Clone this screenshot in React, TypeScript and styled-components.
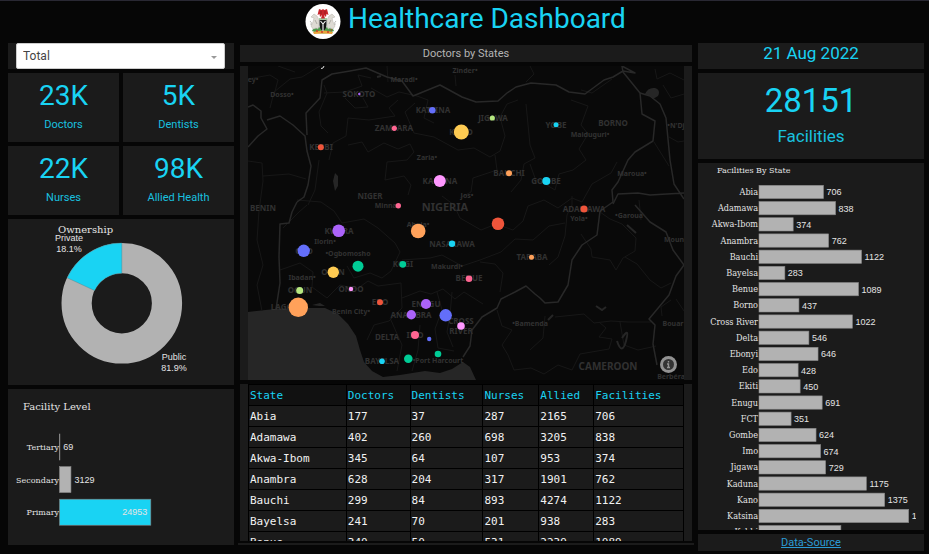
import React from "react";
import styled, { createGlobalStyle } from "styled-components";

const ACCENT = "#19d3f3";
const PANEL = "#1b1b1b";
const SERIF = '"DejaVu Serif", serif';
const SANS = '"Liberation Sans", sans-serif';

const GlobalStyle = createGlobalStyle`
  * { box-sizing: border-box; }
  body {
    margin: 0;
    background: #060606;
    color: #fff;
    font-family: Roboto, sans-serif;
  }
`;

const Page = styled.div`
  border-top: 1px solid #292833;
`;

const Header = styled.header`
  display: flex;
  justify-content: center;
  align-items: flex-start;
  gap: 7px;
  height: 42px;
  padding: 2px 0 0 2px;
`;

const Title = styled.h1`
  margin: 0;
  color: ${ACCENT};
  font-size: 28px;
  line-height: 31px;
  font-weight: 400;
`;

const Columns = styled.main`
  display: grid;
  grid-template-columns: minmax(0, 1fr) minmax(0, 2fr) minmax(0, 1fr);
  align-items: start;
  gap: 6px;
  padding: 0 5px 0 8px;
`;

const Column = styled.section<{ $top?: number }>`
  display: flex;
  flex-direction: column;
  gap: 4px;
  padding-top: ${(p) => p.$top ?? 0}px;
`;

const Panel = styled.div<{ $h?: number; $padX?: number }>`
  background: ${PANEL};
  height: ${(p) => (p.$h ? `${p.$h}px` : "auto")};
  padding: 0 ${(p) => p.$padX ?? 0}px;
  overflow: hidden;
`;

const ScrollPanel = styled(Panel)`
  overflow-y: auto;
  scrollbar-width: none;
`;

const SelectBox = styled.div`
  background: ${PANEL};
  padding: 0 9px 0 8px;
  display: grid;
  align-items: center;
  > * { grid-area: 1 / 1; }
`;

const Select = styled.select`
  appearance: none;
  width: 100%;
  height: 26px;
  border: 1px solid #ccc;
  border-radius: 2px;
  background: #fff;
  color: #444;
  padding: 0 6px;
  font: 12px Roboto, sans-serif;
`;

const Arrow = styled.svg`
  justify-self: end;
  margin: 3px 8px 0 0;
  pointer-events: none;
`;

const Cards = styled.div`
  display: grid;
  grid-template-columns: 1fr 1fr;
  gap: 4px;
`;

const Card = styled.div<{ $large?: boolean }>`
  background: ${PANEL};
  color: ${ACCENT};
  text-align: center;
  height: ${(p) => (p.$large ? 86 : 69)}px;
  padding-top: ${(p) => (p.$large ? 7 : 4)}px;
`;

const Value = styled.div<{ $large?: boolean }>`
  font-size: ${(p) => (p.$large ? 33 : 28)}px;
  line-height: ${(p) => (p.$large ? 41 : 38)}px;
`;

const Caption = styled.div<{ $large?: boolean }>`
  font-size: ${(p) => (p.$large ? 17 : 11)}px;
  line-height: ${(p) => (p.$large ? 30 : 20)}px;
  opacity: 0.9;
`;

const DateBar = styled.div`
  background: ${PANEL};
  color: ${ACCENT};
  text-align: center;
  font-size: 17px;
  line-height: 20px;
  padding-bottom: 6px;
`;

const StripTitle = styled.h2`
  margin: 0;
  background: ${PANEL};
  color: #b4b4b4;
  text-align: center;
  font-size: 11px;
  line-height: 17px;
  font-weight: 400;
`;

const Footer = styled.div`
  background: ${PANEL};
  text-align: center;
  font-size: 11px;
  line-height: 17px;
`;

const Link = styled.a`
  color: #2b9bd6;
  text-decoration: underline;
`;

const Drawing = styled.svg`
  display: block;
  width: 100%;
  height: auto;
`;

const Table = styled.table`
  width: 100%;
  table-layout: fixed;
  border-collapse: collapse;
  font: 11px/18px "DejaVu Sans Mono", monospace;
`;

const Cell = styled.td`
  border: 1px solid #000;
  height: 21px;
  padding: 2px 0 0 1px;
  color: #f2f2f2;
`;

const HeadCell = styled(Cell).attrs({ as: "th" })`
  background: #111;
  color: ${ACCENT};
  font-weight: 400;
  text-align: left;
`;

const EndRule = styled.div`
  height: 2px;
  margin: -2px -2px 0;
  background: ${PANEL};
`;

const Crest = () => (
  <svg width="36" height="36" viewBox="0 0 36 36" role="img" aria-label="Coat of arms">
    <circle cx="18" cy="18.500" r="17.500" fill="#fff" />
    <path d="M8 26 Q18 22 28 26 L29 28 Q18 33 7 28Z" fill="#4b9a4b" />
    <path d="M8 29 Q18 26 28 29 L27 31 Q18 30 9 31Z" fill="#e8a33a" />
    <path d="M11 28h2M16 29h2M22 29h2M26 27h1" stroke="#c93a2b" strokeWidth="1.300" />
    <g fill="#dedbd4" stroke="#b4b1a8" strokeWidth=".5">
      <path d="M14 17 L12 13 L9 11 L6 14 L9 15 L8 19 L6 23 L8 26 L11 25 L13 26 L14 21Z" />
      <path d="M22 17 L24 13 L27 11 L30 14 L27 15 L28 19 L30 23 L28 26 L25 25 L23 26 L22 21Z" />
    </g>
    <path d="M5 18q2 1 1 4M31 18q-2 1 -1 4M10 17l2 4M26 17l-2 4" fill="none" stroke="#8f8c84" strokeWidth=".6" />
    <path d="M14.500 17 H21.500 V22 Q21.500 26 18 28 Q14.500 26 14.500 22Z" fill="#151515" />
    <path d="M15.500 18 L18 21 L20.500 18 M18 21 V28" stroke="#fff" strokeWidth="1.100" fill="none" />
    <path d="M14 16h8" stroke="#4b9a4b" strokeWidth="1" />
    <path d="M18 6 L19.300 7 L22 6 L23.500 12 L21.500 11 L21 14 L19 12 L20 15.500 H16 L17 12 L15 14 L14.500 11 L12.500 12 L14 6 L16.700 7Z" fill="#c8252c" />
    <path d="M16 8v3M20 8v3" stroke="#7b1418" strokeWidth=".6" />
  </svg>
);

const places: [string, number, number, number][] = [
  ["SOKOTO", 359, 97, 8], ["KATSINA", 433, 113, 8], ["ZAMFARA", 394, 131, 8],
  ["KEBBI", 321, 150, 8], ["KANO", 461, 135, 8], ["JIGAWA", 493, 121, 8],
  ["YOBE", 556, 128, 8], ["BORNO", 613, 126, 8], ["KADUNA", 440, 184, 8],
  ["BAUCHI", 509, 176, 8], ["GOMBE", 546, 184, 8], ["NIGER", 370, 199, 8],
  ["BENIN", 263, 211, 8], ["KWARA", 339, 234, 8], ["NASARAWA", 452, 247, 8],
  ["KOGI", 403, 267, 8], ["OSUN", 333, 275, 8], ["OYO", 304, 254, 8],
  ["OGUN", 300, 293, 8], ["ONDO", 351, 292, 8], ["LAGOS", 284, 310, 8],
  ["EDO", 380, 305, 8], ["ENUGU", 426, 307, 8], ["ANAMBRA", 411, 318, 8],
  ["CROSS", 461, 324, 8], ["RIVER", 461, 334, 8], ["IMO", 415, 338, 8],
  ["DELTA", 387, 340, 8], ["BAYELSA", 382, 364, 8], ["BENUE", 469, 281, 8],
  ["TARABA", 532, 260, 8], ["ADAMAWA", 584, 212, 8],
  ["NIGERIA", 445, 211, 11], ["CAMEROON", 608, 370, 10],
  ["Maradi•", 404, 82, 7], ["Zinder•", 465, 73, 7], ["Dosso•", 282, 97, 7],
  ["ey•", 253, 82, 7], ["Maiduguri•", 590, 137, 7], ["•N'Dj", 676, 128, 7],
  ["Maroua•", 632, 176, 7], ["Zaria•", 427, 160, 7], ["Jos•", 467, 198, 7],
  ["Minna•", 387, 208, 7], ["Abuja•", 418, 227, 7], ["Ilorin•", 325, 244, 7],
  ["•Ogbomosho", 348, 256, 7], ["Ibadan•", 302, 280, 7], ["Makurdi•", 447, 269, 7],
  ["Benin City•", 351, 314, 7], ["•Port Harcourt", 438, 363, 7], ["Yola•", 579, 221, 7],
  ["•Garoua", 629, 218, 7], ["Moun", 674, 242, 7], ["•Bamenda", 530, 326, 7],
  ["Bouar", 673, 326, 7], ["Berbéra", 671, 379, 7],
];

const bubbles: [number, number, number, string][] = [
  [359.300, 94, 1.200, "#ab63fa"], [432.300, 110.300, 3.300, "#636efa"], [461.300, 132, 7.500, "#fecb52"],
  [394.300, 128.300, 2.600, "#ff6692"], [320.800, 147.300, 3, "#ef553b"], [439.800, 181, 6, "#ff97ff"],
  [492.300, 118, 2.600, "#b6e880"], [556, 124.700, 2.500, "#19d3f3"], [509, 173.300, 3, "#ffa15a"],
  [546.300, 181, 4, "#19d3f3"], [398.300, 205.700, 2.700, "#ff6692"], [338.700, 230.700, 6.300, "#ab63fa"],
  [418.200, 231, 7.300, "#ffa15a"], [452, 243.700, 3.200, "#19d3f3"], [303.700, 250.800, 6.200, "#636efa"],
  [333.300, 272.200, 5.700, "#fecb52"], [358, 266.200, 5.500, "#00cc96"], [402.800, 264.300, 3.400, "#00cc96"],
  [469, 278.700, 3.300, "#ff6692"], [299.700, 290.400, 3.500, "#b6e880"], [351, 289, 2.200, "#ff97ff"],
  [298.300, 307.300, 9.700, "#ffa15a"], [380, 302.300, 3, "#ef553b"], [426, 304, 5.100, "#ab63fa"],
  [411.300, 314.700, 4.700, "#ab63fa"], [445.700, 315.300, 6.200, "#636efa"], [461, 326, 3.800, "#ff97ff"],
  [415, 335, 4, "#ff6692"], [429.200, 339, 2.200, "#636efa"], [438, 354, 3.300, "#00cc96"],
  [408.300, 358.700, 4.300, "#00cc96"], [382, 361.200, 2.800, "#19d3f3"], [498, 223.700, 6.300, "#ef553b"],
  [584, 209, 3.600, "#ef553b"], [531.500, 257.300, 2.500, "#ffa15a"],
];

const StateMap = () => (
  <Drawing viewBox="248 66 436 314" role="img" aria-label="Map of doctors by state">
    <rect x="248" y="66" width="436" height="314" fill="#090909" />
    <path d="M248 312 L275 309 L300 308 L325 308 L338 314 L348 324 L356 336 L360 350 L364 362 L372 371 L383 377 L400 375 L425 371 L440 373 L452 369 L463 362 L470 367 L476 380 H248Z" fill="#262626" />
    <path d="M312 305l8-2 5 3-6 0zM645 94q3-7 10-6q6 2 3 8l-5 3-3-3zM335 173l3 3 0 10-3 5-2-10z" fill="#262626" />
    <g fill="none" stroke="#171717" strokeWidth="1">
      <path d="M324 85L327 93L319 112L321 126L328 133M324 93L345 92L362 86L358 75L371 78M345 98L355 108L368 107L363 98M371 88L387 97L399 92L417 96L428 100L424 118L434 123M398 100L389 108L395 116L369 120L348 118L346 136L333 143L329 160M348 145L362 142L368 152L384 143L398 149L410 144L414 152L407 160L387 162L385 180L404 176L411 185L408 195M415 103L405 112L414 133L434 137L458 150L474 148L490 157L500 151L505 136L500 117L507 104L518 100" />
      <path d="M278 66L295 72M248 79L270 75L278 80L274 95M320 66L302 77L290 79L274 92L270 108M530 66L534 74L526 82M455 75L456 86M526 104L530 145L535 158L524 164L521 180L511 192M571 100L588 106L581 125L588 134L579 149L586 160L573 170L559 174L555 190L535 178L530 164M495 155L497 170L473 178L471 192L460 198M442 196L454 205L460 218L481 230L496 224L513 230L523 221L528 206L544 200L558 208L572 198L582 202L592 184L611 173L617 162" />
      <path d="M248 161L262 163L263 181L259 211L257 240L263 265L257 285L262 311M263 176L289 174L306 179M319 160L315 190L308 205M297 200L321 202L334 211L342 223L364 219L378 228L395 243L400 252L391 271L382 278L370 273L354 278L347 266M283 228L299 212L307 205M280 270L300 263L313 272L312 287L327 298L340 285L357 289L368 281L378 286L401 283L402 308L389 321L374 325L367 340M402 260L430 258L442 255L462 266L480 260L501 252L515 239L533 240L549 226L565 223M402 298L420 291L431 294L443 289L455 299L464 292L483 304M390 318L402 345L397 371M420 325L418 350L412 371M437 292L442 310L435 329L438 348L454 351M452 292L450 315L447 332L453 347M480 262L495 264L503 273L500 292" />
      <path d="M581 234L591 249L592 257L610 260L616 270L623 258L635 251L636 238L622 224L610 219L600 212M625 257L637 264L650 280L661 288L671 283M555 317L584 314L594 323L611 321L628 322L651 322M497 310L502 326L512 330L502 345L508 355L514 370L531 368L544 374L558 365L572 370L580 354L609 349L612 339L599 337L606 328L599 322M545 316L543 338L530 350M620 322L624 345L638 350L656 346M655 69L657 79L670 73L684 80M663 85L671 98L684 94M669 137L678 142L684 141M671 300L661 307L662 316M676 299L684 311M549 265L558 257L565 236L567 215L572 205L572 196" />
      <path d="M387 66L388 82M612 79L592 93L581 90M654 142L669 166M639 200L641 220" />
      <path d="M596 306l6 4 4-3M622 338q8-12 4 3t-9 0M627 225l9 8M377 77l4-1M548 320l5-5" stroke="#262626" strokeWidth="2" />
    </g>
    <g fill="none" stroke="#282828" strokeWidth="1.500" strokeLinejoin="round">
      <path d="M248 107L253 105L261 111L261 118L267 129L258 136L248 147M267 120L280 116L293 125L305 136L307 151L311 166L308 185L304 197L297 202M307 135L306 113L320 98L322 80L332 74L350 71L366 68L387 77L402 81L413 96L440 85L462 97L476 102L498 101L507 93L516 87L531 83L556 85L569 92L585 94L604 80L613 77L623 71L635 73L622 66" />
      <path d="M622 66L623 72L640 93L642 114L655 121L653 141L635 152L628 160L618 182L612 190L613 202L600 211L597 235L582 245L572 260L568 285L558 302L545 303L540 298L535 294L526 286L515 292L501 299L497 308L482 317L472 330L470 346L463 357" />
      <path d="M297 202L292 212L289 223L280 224L279 257L280 283L276 309M640 93L650 96L660 104L666 118L670 160L674 184L684 199M613 204L618 194L638 193L650 195L684 193M635 205L650 222L666 232L673 250L684 265L676 276L669 295L649 319L655 325L653 344L657 365" />
    </g>
    <g fill="#313131" fontFamily='"Noto Sans", sans-serif' fontWeight="700" textAnchor="middle">
      {places.map(([name, x, y, size]) => (
        <text key={name} x={x} y={y} fontSize={size}>{name}</text>
      ))}
    </g>
    {bubbles.map(([x, y, r, color]) => (
      <circle key={`${x}-${y}`} cx={x} cy={y} r={r} fill={color} />
    ))}
    <path d="M324 66L323 68L321 68.500" fill="none" stroke="#ddd" strokeWidth="1" />
    <circle cx="668.500" cy="364.500" r="8.500" fill="#929292" />
    <circle cx="668.500" cy="364.500" r="5.500" fill="#333" />
    <path d="M668.500 361v1.500M667 364h1.500v3.500M667 367.500h3" stroke="#929292" strokeWidth="1.400" fill="none" />
  </Drawing>
);

const Ownership = () => (
  <Drawing viewBox="0 0 226 166" role="img" aria-label="Ownership">
    <circle cx="113.800" cy="84.300" r="45.200" fill="none" stroke="#b2b2b2" strokeWidth="30.200" />
    <path d="M113.800 24 A60.300 60.300 0 0 0 59.200 58.800 L86.500 71.500 A30.100 30.100 0 0 1 113.800 54.200Z" fill={ACCENT} stroke="#4b7d86" strokeWidth=".4" />
    <text x="50" y="14" fontFamily={SERIF} fontSize="10" fill="#e4e4e4">Ownership</text>
    <g fontFamily={SANS} fontSize="9" fill="#e4e4e4" textAnchor="middle">
      <text x="61" y="22">Private</text>
      <text x="61" y="33">18.1%</text>
      <text x="166" y="141">Public</text>
      <text x="166" y="152">81.9%</text>
    </g>
  </Drawing>
);

const levels: [string, number][] = [["Tertiary", 69], ["Secondary", 3129], ["Primary", 24953]];

const FacilityLevel = () => (
  <Drawing viewBox="0 0 226 156" role="img" aria-label="Facility level">
    <text x="15" y="21" fontFamily={SERIF} fontSize="10" fill="#e4e4e4">Facility Level</text>
    {levels.map(([name, value], i) => {
      const width = value * 0.00366;
      const y = 45 + i * 32.6;
      const inside = width > 60;
      return (
        <g key={name}>
          <rect x="51.500" y={y} width={Math.max(width, 0.4)} height="26" fill={inside ? ACCENT : "#b2b2b2"} stroke="#858585" strokeWidth=".6" />
          <text x="51" y={y + 16} textAnchor="end" fontFamily={SERIF} fontSize="8" fill="#e4e4e4">{name}</text>
          <text x={inside ? 48 + width : 55 + width} y={y + 16} textAnchor={inside ? "end" : "start"} fontFamily={SANS} fontSize="9" fill="#e4e4e4">{value}</text>
        </g>
      );
    })}
  </Drawing>
);

const facilities: [string, number][] = [
  ["Abia", 706], ["Adamawa", 838], ["Akwa-Ibom", 374], ["Anambra", 762], ["Bauchi", 1122],
  ["Bayelsa", 283], ["Benue", 1089], ["Borno", 437], ["Cross River", 1022], ["Delta", 546],
  ["Ebonyi", 646], ["Edo", 428], ["Ekiti", 450], ["Enugu", 691], ["FCT", 351], ["Gombe", 624],
  ["Imo", 674], ["Jigawa", 729], ["Kaduna", 1175], ["Kano", 1375], ["Katsina", 1638], ["Kebbi", 896],
];

const FacilitiesByState = () => (
  <Drawing viewBox="0 0 210 384" role="img" aria-label="Facilities by state">
    <text x="11" y="10" fontFamily={SERIF} fontSize="8" fill="#e4e4e4">Facilities By State</text>
    {facilities.map(([name, value], i) => {
      const y = 22.3 + i * 16.2;
      const width = value * 0.0914;
      return (
        <g key={name}>
          <rect x="53" y={y} width={width} height="13.300" fill="#b2b2b2" stroke="#858585" strokeWidth=".6" />
          <text x="52" y={y + 9.7} textAnchor="end" fontFamily='"DejaVu Serif Condensed", "DejaVu Serif", serif' fontSize="9" fill="#e4e4e4">{name}</text>
          <text x={56 + width} y={y + 10} fontFamily={SANS} fontSize="9" fill="#e4e4e4">{value}</text>
        </g>
      );
    })}
  </Drawing>
);

const headings: [string, number][] = [
  ["State", 98], ["Doctors", 64], ["Dentists", 73], ["Nurses", 56], ["Allied", 55], ["Facilities", 90],
];
const rows = [
  ["Abia", 177, 37, 287, 2165, 706],
  ["Adamawa", 402, 260, 698, 3205, 838],
  ["Akwa-Ibom", 345, 64, 107, 953, 374],
  ["Anambra", 628, 204, 317, 1901, 762],
  ["Bauchi", 299, 84, 893, 4274, 1122],
  ["Bayelsa", 241, 70, 201, 938, 283],
  ["Benue", 340, 50, 531, 2239, 1089],
];
const stats = [["23K", "Doctors"], ["5K", "Dentists"], ["22K", "Nurses"], ["98K", "Allied Health"]];

const Col = styled.col<{ $share: number }>`
  width: ${(p) => (p.$share * 100) / 436}%;
`;

export default function App() {
  return (
    <Page>
      <GlobalStyle />
      <Header>
        <Crest />
        <Title>Healthcare Dashboard</Title>
      </Header>
      <Columns>
        <Column>
          <SelectBox>
            <Select aria-label="Category" defaultValue="Total">
              <option>Total</option>
              <option>Public</option>
              <option>Private</option>
            </Select>
            <Arrow width="6" height="3" viewBox="0 0 6 3"><path d="M0 0h6L3 3z" fill="#999" /></Arrow>
          </SelectBox>
          <Cards>
            {stats.map(([value, label]) => (
              <Card key={label}>
                <Value>{value}</Value>
                <Caption>{label}</Caption>
              </Card>
            ))}
          </Cards>
          <Panel><Ownership /></Panel>
          <Panel><FacilityLevel /></Panel>
        </Column>
        <Column $top={2}>
          <StripTitle>Doctors by States</StripTitle>
          <Panel $padX={8}><StateMap /></Panel>
          <ScrollPanel $h={157} $padX={8}>
            <Table>
              <colgroup>{headings.map(([h, w]) => <Col key={h} $share={w} />)}</colgroup>
              <thead>
                <tr>{headings.map(([h]) => <HeadCell key={h}>{h}</HeadCell>)}</tr>
              </thead>
              <tbody>
                {rows.map((row) => (
                  <tr key={row[0]}>{row.map((cell, i) => <Cell key={i}>{cell}</Cell>)}</tr>
                ))}
              </tbody>
            </Table>
          </ScrollPanel>
          <EndRule />
        </Column>
        <Column>
          <DateBar>21 Aug 2022</DateBar>
          <Card $large>
            <Value $large>28151</Value>
            <Caption $large>Facilities</Caption>
          </Card>
          <ScrollPanel $h={367} $padX={8}><FacilitiesByState /></ScrollPanel>
          <Footer><Link href="#data-source">Data-Source</Link></Footer>
        </Column>
      </Columns>
    </Page>
  );
}
